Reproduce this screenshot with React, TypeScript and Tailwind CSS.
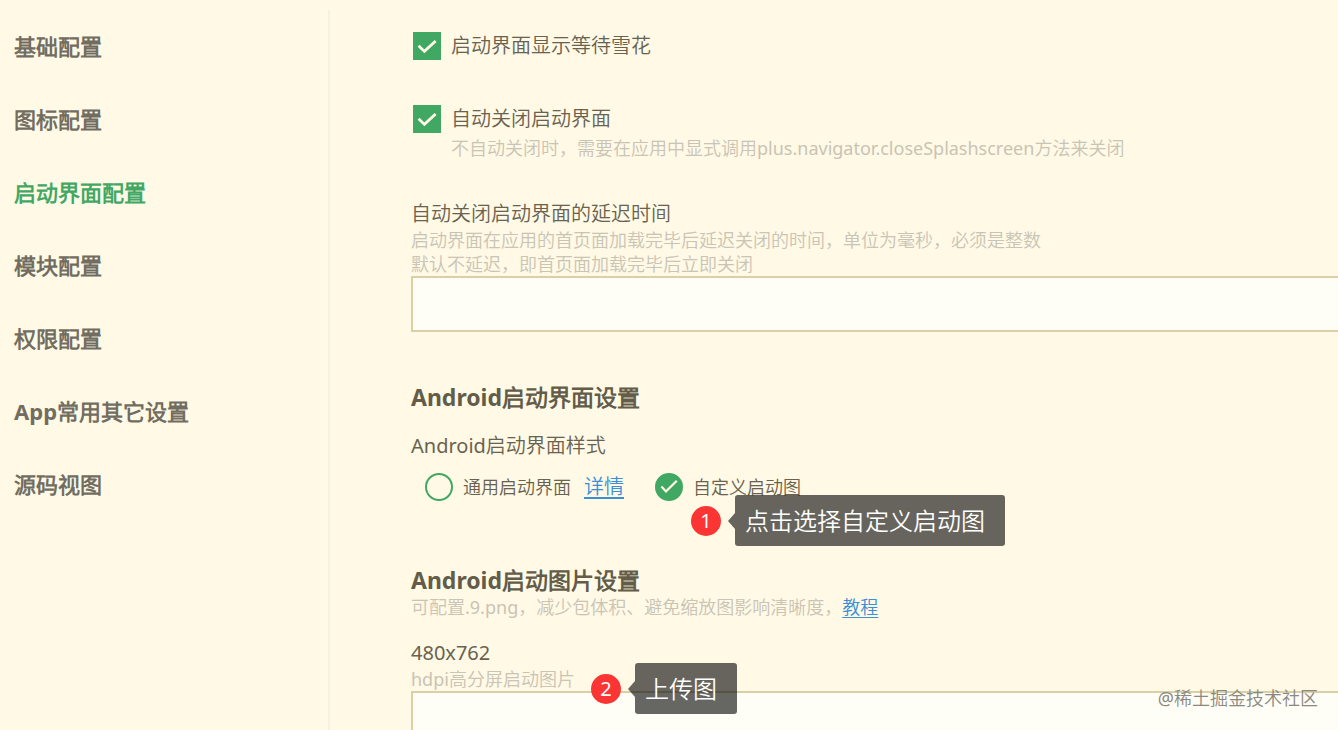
import * as React from "react";

const MENU = [
  "基础配置",
  "图标配置",
  "启动界面配置",
  "模块配置",
  "权限配置",
  "App常用其它设置",
  "源码视图",
];

const styles = {
  root: `
    relative flex h-screen overflow-hidden bg-[#fff9e6] pt-[10px]
    font-['Noto_Sans','Noto_Sans_CJK_SC_DemiLight','Noto_Sans_CJK_SC',sans-serif]
    text-xl leading-7 text-[#68624e]
  `,
  title: "text-[23px] leading-7 font-bold text-[#625c49]",
  hint: "text-lg leading-6 text-[#c9c4b4]",
  input:
    "block h-14 w-full border-2 border-r-0 border-[#dacfa6] bg-[#fffef6] px-3 outline-none",
  link: "text-[#3a8fd6] underline underline-offset-3",
};

const Check = ({ d, width }: { d: string; width: number }) => (
  <svg
    viewBox="0 0 28 28"
    className="pointer-events-none col-start-1 row-start-1 size-7"
    fill="none"
    stroke="#fff9e6"
    strokeWidth={width}
  >
    <path d={d} />
  </svg>
);

type FieldProps = { id: string; children: React.ReactNode };

const CheckField = ({ id, children }: FieldProps) => (
  <div className="flex items-center gap-[10px] pl-[2px]">
    <span className="grid">
      <input
        id={id}
        type="checkbox"
        defaultChecked
        className="col-start-1 row-start-1 size-7 appearance-none bg-[#41a863]"
      />
      <Check d="M5.6 13.8 11.4 19.4 22.6 9" width={2.8} />
    </span>
    <label htmlFor={id}>{children}</label>
  </div>
);

const RadioField = ({
  id,
  checked = false,
  children,
}: FieldProps & { checked?: boolean }) => (
  <div className="flex items-center gap-[10px]">
    <span className="grid">
      <input
        id={id}
        type="radio"
        name="splash"
        defaultChecked={checked}
        className="col-start-1 row-start-1 size-7 appearance-none rounded-full border-2 border-[#41a863] checked:bg-[#41a863]"
      />
      {checked && <Check d="M6.4 13.6 11 18.4 21.8 7.8" width={2.2} />}
    </span>
    <label htmlFor={id} className="text-lg leading-7">
      {children}
    </label>
  </div>
);

const Tip = ({ step, text }: { step: number; text: string }) => (
  <div className="flex items-center whitespace-nowrap text-white">
    <span className="mr-[7px] flex size-[30px] items-center justify-center rounded-full bg-[#fb3434] text-xl">
      {step}
    </span>
    <svg viewBox="0 0 7 16" className="h-4 w-[7px] fill-black/60">
      <path d="M7 0V16L0 8Z" />
    </svg>
    <span className="rounded-[3px] bg-black/60 py-[9px] pr-5 pl-[10px] text-2xl leading-[33px]">
      {text}
    </span>
  </div>
);

const App: React.FC = () => {
  return (
    <div className={styles.root}>
      <nav className="w-[330px] shrink-0 border-r-2 border-[#f6f1e0]">
        {MENU.map((text, i) => {
          return (
            <a
              key={"" + i}
              href="#"
              className={
                "flex h-[73px] items-center pb-[2px] pl-[14px] text-[22px] font-bold " +
                (i === 2 ? "text-[#41a863]" : "text-[#716d61]")
              }
            >
              {text}
            </a>
          );
        })}
      </nav>

      <main className="min-w-0 flex-1 pt-[22px] pl-[81px]">
        <CheckField id="waiting">启动界面显示等待雪花</CheckField>
        <div className="mt-[45px]">
          <CheckField id="autoclose">自动关闭启动界面</CheckField>
          <p className={styles.hint + " mt-[3px] pl-10"}>
            不自动关闭时，需要在应用中显式调用plus.navigator.closeSplashscreen方法来关闭
          </p>
        </div>

        <label htmlFor="delay" className="mt-10 block">
          自动关闭启动界面的延迟时间
        </label>
        <p className={styles.hint}>
          启动界面在应用的首页面加载完毕后延迟关闭的时间，单位为毫秒，必须是整数
          <br />
          默认不延迟，即首页面加载完毕后立即关闭
        </p>
        <input id="delay" type="text" className={styles.input} />

        <h2 className={styles.title + " mt-[51px]"}>Android启动界面设置</h2>
        <p className="mt-[21px]">Android启动界面样式</p>
        <div className="mt-[13px] flex items-center pl-[14px]">
          <RadioField id="common">通用启动界面</RadioField>
          <a href="#" className={styles.link + " ml-[13px]"}>
            详情
          </a>
          <div className="relative ml-[31px]">
            <RadioField id="custom" checked>
              自定义启动图
            </RadioField>
            <div className="absolute top-[22px] left-9">
              <Tip step={1} text="点击选择自定义启动图" />
            </div>
          </div>
        </div>

        <h2 className={styles.title + " mt-[65px]"}>Android启动图片设置</h2>
        <p className={styles.hint + " mt-px"}>
          可配置.9.png，减少包体积、避免缩放图影响清晰度，
          <a href="#" className={styles.link}>
            教程
          </a>
        </p>
        <label htmlFor="hdpi" className="mt-5 block">
          480x762
        </label>
        <p className={styles.hint}>hdpi高分屏启动图片</p>
        <div className="relative">
          <input id="hdpi" type="text" className={styles.input} />
          <div className="absolute -top-7 left-[180px]">
            <Tip step={2} text="上传图" />
          </div>
        </div>
      </main>

      <span className="absolute right-5 bottom-5 text-lg leading-6 text-[#8b8880]">
        @稀土掘金技术社区
      </span>
    </div>
  );
};

export default App;
